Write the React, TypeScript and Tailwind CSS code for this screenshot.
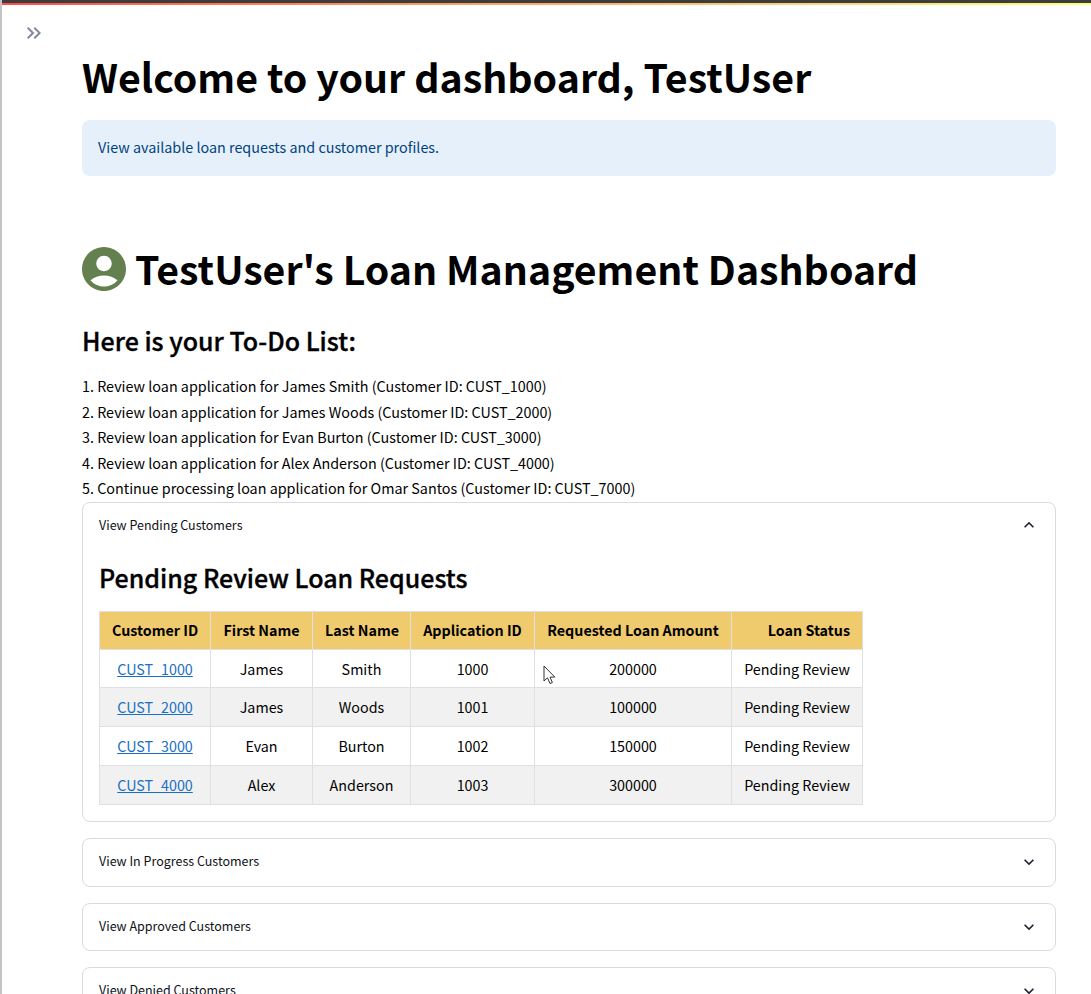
import React from 'react';

const font = "font-['Noto_Sans_CJK_JP','Liberation_Sans',sans-serif]";

const todos = [
  'Review loan application for James Smith (Customer ID: CUST_1000)',
  'Review loan application for James Woods (Customer ID: CUST_2000)',
  'Review loan application for Evan Burton (Customer ID: CUST_3000)',
  'Review loan application for Alex Anderson (Customer ID: CUST_4000)',
  'Continue processing loan application for Omar Santos (Customer ID: CUST_7000)',
];

const rows = [
  { id: 'CUST_1000', first: 'James', last: 'Smith', app: 1000, amount: 200000, h: 'h-[38px]' },
  { id: 'CUST_2000', first: 'James', last: 'Woods', app: 1001, amount: 100000, h: 'h-[39px]' },
  { id: 'CUST_3000', first: 'Evan', last: 'Burton', app: 1002, amount: 150000, h: 'h-[39px]' },
  { id: 'CUST_4000', first: 'Alex', last: 'Anderson', app: 1003, amount: 300000, h: 'h-[39px]' },
];

const headers = [
  { label: 'Customer ID', w: 'w-[111px]', align: 'text-center' },
  { label: 'First Name', w: 'w-[102px]', align: 'text-center' },
  { label: 'Last Name', w: 'w-[98px]', align: 'text-center' },
  { label: 'Application ID', w: 'w-[124px]', align: 'text-center' },
  { label: 'Requested Loan Amount', w: 'w-[197px]', align: 'text-center' },
  { label: 'Loan Status', w: 'w-[131px]', align: 'text-right' },
];

const Chevron = ({ up }: { up?: boolean }) => (
  <svg viewBox="0 0 24 24" className="h-5 w-5 fill-[#1f2230]">
    <path d={up ? 'M12 8l-6 6 1.41 1.41L12 10.83l4.59 4.58L18 14z' : 'M16.59 8.59 12 13.17 7.41 8.59 6 10l6 6 6-6z'} />
  </svg>
);

const Collapsed = ({ label, h }: { label: string; h: string }) => (
  <div className={`flex ${h} items-center justify-between rounded-lg border border-[#d9dbdf] pl-4 pr-4`}>
    <span className="pb-[2px] text-[12.5px] leading-5 text-[#0e1117]">{label}</span>
    <Chevron />
  </div>
);

const App: React.FC = () => {
  const cell = 'border border-[#e0e0e3] px-3 text-[14.3px] leading-6 whitespace-nowrap';
  const td = `${cell} pt-[1px]`;
  const heading = 'text-[25px] font-medium leading-9 [-webkit-text-stroke:0.35px_black]';

  return (
    <div className={`${font} relative h-[994px] overflow-hidden border-l-2 border-[#c4c4c4] bg-white text-black`}>
      {/* browser edge on top of the app */}
      <div className="h-[3px] bg-[#3d3d3d]" />
      <div className="h-[2px] bg-gradient-to-r from-[#ff4b4b] to-[#ffff7d]" />

      <button className="absolute left-[20px] top-[21px]">
        <svg viewBox="0 0 24 24" className="h-6 w-6 fill-[#808a9c]">
          <path d="M6.41 6 5 7.41 9.58 12 5 16.59 6.41 18l6-6z" />
          <path d="M13 6l-1.41 1.41L16.17 12l-4.58 4.59L13 18l6-6z" />
        </svg>
      </button>

      <main className="ml-[80px] w-[974px]">
        <h1 className="mt-[44px] text-[39.3px] font-bold leading-[54px]">Welcome to your dashboard, TestUser</h1>

        <div className="mt-[17px] flex h-14 items-center rounded-lg bg-[#e6f0fa] px-4 pb-[2px] text-[14.35px] text-[#004280]">
          View available loan requests and customer profiles.
        </div>

        <div className="mt-[66px] flex items-center gap-[9px]">
          <svg viewBox="2 2 20 20" className="h-11 w-11 fill-[#64804f]">
            <path d="M12 2C6.48 2 2 6.48 2 12s4.48 10 10 10 10-4.48 10-10S17.52 2 12 2zm0 4c1.93 0 3.5 1.57 3.5 3.5S13.93 13 12 13s-3.5-1.57-3.5-3.5S10.07 6 12 6zm0 14c-2.03 0-4.43-.82-6.14-2.88C7.55 15.8 9.68 15 12 15s4.45.8 6.14 2.12C16.43 19.18 14.03 20 12 20z" />
          </svg>
          <h2 className="pb-[2px] text-[39.25px] font-bold leading-[52px]">TestUser's Loan Management Dashboard</h2>
        </div>

        <h3 className={`mt-[26px] ${heading}`}>Here is your To-Do List:</h3>

        <ol className="mt-[15px] mb-[1px] text-[14.35px] leading-[25.6px]">
          {todos.map((t, i) => (
            <li key={t}>
              {i + 1}. {t}
            </li>
          ))}
        </ol>

        <div className="h-[320px] rounded-lg border border-[#d9dbdf]">
          <div className="flex h-[44px] items-center justify-between px-4">
            <span className="text-[12.5px] leading-5 text-[#0e1117]">View Pending Customers</span>
            <Chevron up />
          </div>
          <div className="px-4">
            <h3 className={`mt-[12px] ${heading}`}>Pending Review Loan Requests</h3>
            <table className="mt-[16px] w-[763px] table-fixed border-collapse">
              <thead>
                <tr className="h-[38px] bg-[#efcb6e]">
                  {headers.map((h) => (
                    <th key={h.label} className={`${cell} ${h.w} ${h.align} border-[#e0c168] font-bold`}>
                      {h.label}
                    </th>
                  ))}
                </tr>
              </thead>
              <tbody>
                {rows.map((r, i) => (
                  <tr key={r.id} className={`${r.h} ${i % 2 ? 'bg-[#f1f1f1]' : 'bg-white'}`}>
                    <td className={`${td} text-center`}>
                      <a href="#" className="text-[#1a6fc4] underline">
                        {r.id}
                      </a>
                    </td>
                    <td className={`${td} text-center`}>{r.first}</td>
                    <td className={`${td} text-center`}>{r.last}</td>
                    <td className={`${td} text-center`}>{r.app}</td>
                    <td className={`${td} text-center`}>{r.amount}</td>
                    <td className={`${td} text-right`}>Pending Review</td>
                  </tr>
                ))}
              </tbody>
            </table>
          </div>
        </div>

        <div className="mt-4 flex flex-col gap-4">
          <Collapsed label="View In Progress Customers" h="h-[49px]" />
          <Collapsed label="View Approved Customers" h="h-[48px]" />
          <Collapsed label="View Denied Customers" h="h-[48px]" />
        </div>
      </main>

      {/* mouse pointer caught in the screenshot */}
      <svg viewBox="0 0 14 20" className="absolute left-[541px] top-[665px] h-5 w-[14px] fill-white stroke-[#333] stroke-1">
        <path d="M1 1v15l3.5-3.2L7 18.5l2.4-1-2.4-5.4h4.8z" />
      </svg>
    </div>
  );
};

export default App;
